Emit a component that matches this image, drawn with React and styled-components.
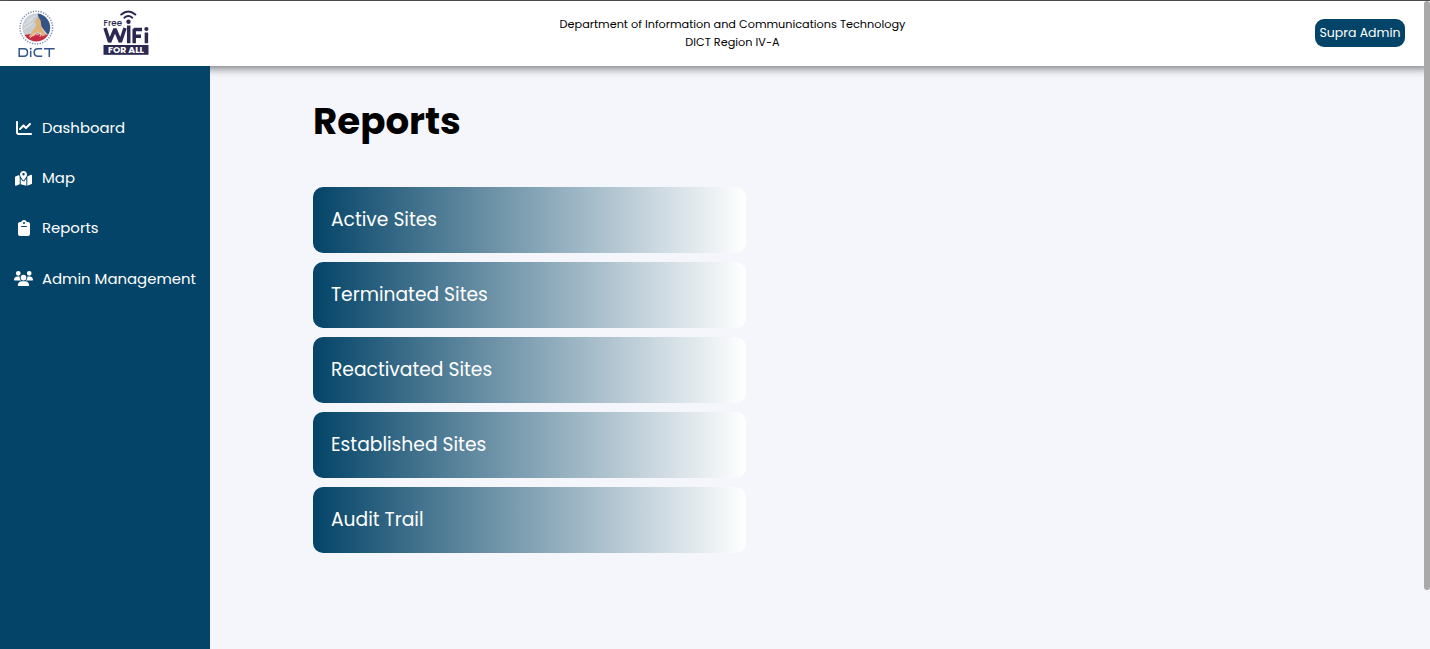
import React from 'react';
import styled, { createGlobalStyle } from 'styled-components';
import { FaChartLine, FaMapLocationDot, FaClipboard, FaUsers } from 'react-icons/fa6';

const GlobalStyle = createGlobalStyle`
  * { box-sizing: border-box; }
  body {
    margin: 0;
    overflow: hidden;
    background: #f4f6fb;
    font-family: Poppins, Inter, 'Open Sans', sans-serif;
  }
`;

const Page = styled.div`
  position: relative;
  display: flex;
  flex-direction: column;
  height: 100vh;
  border-top: 1px solid #58585a;
`;

const Header = styled.header`
  display: grid;
  grid-template-columns: 1fr auto 1fr;
  flex: none;
  height: 65px;
  padding: 0 25px 0 18px;
  background: #fff;
  box-shadow: 0 2px 9px rgba(0, 0, 0, 0.55);
`;

const Logos = styled.div`
  display: flex;
  gap: 47px;
  padding-top: 8px;
`;

const Department = styled.div`
  padding-top: 15px;
  margin-left: 42px;
  font-size: 11.27px;
  line-height: 17.5px;
  text-align: center;
  white-space: nowrap;
  color: #000;
`;

const UserButton = styled.button`
  justify-self: end;
  width: 90px;
  height: 28px;
  margin-top: 18px;
  padding: 0;
  border: 0;
  border-radius: 9px;
  background: #044468;
  color: #fff;
  font: 400 12.5px/28px Poppins, Inter, sans-serif;
  white-space: nowrap;
`;

const Body = styled.div`
  display: flex;
  flex: 1;
  min-height: 0;
`;

const Sidebar = styled.nav`
  position: relative;
  display: flex;
  flex-direction: column;
  flex: none;
  width: 210px;
  padding-top: 36.9px;
  background: #044468;
`;

const NavItem = styled.a`
  display: flex;
  align-items: center;
  height: 50.2px;
  color: #fff;
  font-size: 14.9px;
  white-space: nowrap;
`;

const NavIcon = styled.span`
  display: flex;
  justify-content: center;
  width: 18px;
  margin: 0 9px 0 15px;
  svg {
    flex: none;
    margin-left: -1px;
  }
`;

const Main = styled.main`
  flex: 1;
  padding: 29px 0 0 103px;
`;

const Title = styled.h1`
  margin: 0 0 40px;
  font-size: 37.2px;
  font-weight: 700;
  line-height: 52px;
  color: #000;
`;

const ReportList = styled.div`
  display: flex;
  flex-direction: column;
  gap: 9.4px;
  width: 433px;
`;

const ReportCard = styled.button`
  height: 65.7px;
  padding: 0 0 0 18px;
  border: 0;
  border-radius: 10px;
  background: linear-gradient(90deg, #044468, #fff);
  color: #fff;
  font: 400 18.7px/64px Poppins, Inter, sans-serif;
  text-align: left;
`;

const ScrollThumb = styled.div`
  position: absolute;
  top: 0;
  right: 0;
  width: 6px;
  height: 589px;
  border-radius: 3px;
  background: #a9a9a9;
`;

const DictLogo = () => (
  <svg width="38" height="50" viewBox="0 0 38 50">
    <circle cx="18.300" cy="18.600" r="16.300" fill="none" stroke="#8390ae" strokeWidth="1.5" strokeDasharray="1.300 1.300" />
    <circle cx="18.300" cy="18.600" r="14" fill="#c9ced5" />
    <path d="M19.500 4.600a14 14 0 0 1 10.500 21.500L23 17Z" fill="#345386" />
    <path d="M6.500 26Q18 23 30 26A14 14 0 0 1 6.500 26Z" fill="#c52c43" />
    <path d="M9 12l8-5M6 16l9-6M6 20l9-6" stroke="#e9ebee" strokeWidth="0.8" />
    <path d="M18 10l2-2 2.500 3 1 7 4 8-3 1.500-5-5.500-3 5-6 1 4-6 4-6-1.500-3Z" fill="#dfb277" />
    <path d="M12 29l5-5 2 2 4-2-1 4" fill="none" stroke="#f1dce0" strokeWidth="0.8" />
    <g fill="none" stroke="#34558c" strokeWidth="1.5">
      <path d="M1.200 39.800H6q3.500 0 3.500 3.700T6 47.200H1.200ZM12.700 41.800v6.100M24.200 39.800H20q-3.800 0-3.800 3.700t3.800 3.700h4.200M26 39.800h10.700M31.300 40v7.900" />
    </g>
    <circle cx="12.700" cy="39.800" r="1" fill="#34558c" />
  </svg>
);

const WifiLogo = () => (
  <svg width="47" height="48" viewBox="0 0 47 48">
    <g fill="none" stroke="#2b2851" strokeLinecap="round">
      <path d="M18.300 5.500q7-6 14 0" strokeWidth="2.100" />
      <path d="M21.300 8.700q4-3.400 8 0" strokeWidth="1.900" />
    </g>
    <circle cx="25.500" cy="12.800" r="2.200" fill="#2b2851" />
    <text x="0.500" y="16.800" fontFamily="Poppins, Inter, sans-serif" fontSize="8" fontWeight="500" fill="#2b2851" textLength="18.500" lengthAdjust="spacingAndGlyphs">Free</text>
    <g fill="none" stroke="#2b2851" strokeWidth="3.500" strokeLinejoin="bevel">
      <path d="M2 19l4.600 14L12 20l5.400 13L22 19" />
      <path d="M25.700 16.500v17.700M31.200 34.200V20.600h7.800M31 27.200h7M43.400 23.500v10.700" />
    </g>
    <circle cx="43.400" cy="20" r="2.100" fill="#2b2851" />
    <rect x="0.500" y="36" width="45" height="9.800" fill="#2b2851" />
    <text x="5" y="43.900" fontFamily="Poppins, Inter, sans-serif" fontSize="8.500" fontWeight="700" fill="#fff" textLength="36" lengthAdjust="spacingAndGlyphs">FOR ALL</text>
  </svg>
);

const navItems = [
  { label: 'Dashboard', icon: FaChartLine, size: 16 },
  { label: 'Map', icon: FaMapLocationDot, size: 17 },
  { label: 'Reports', icon: FaClipboard, size: 16 },
  { label: 'Admin Management', icon: FaUsers, size: 19 },
];

const reports = ['Active Sites', 'Terminated Sites', 'Reactivated Sites', 'Established Sites', 'Audit Trail'];

export default function App() {
  return (
    <>
      <GlobalStyle />
      <Page>
        <Header>
          <Logos>
            <DictLogo />
            <WifiLogo />
          </Logos>
          <Department>
            <div>Department of Information and Communications Technology</div>
            <div>DICT Region IV-A</div>
          </Department>
          <UserButton>Supra Admin</UserButton>
        </Header>
        <Body>
          <Sidebar>
            {navItems.map(({ label, icon: Icon, size }) => (
              <NavItem key={label}>
                <NavIcon><Icon size={size} /></NavIcon>
                {label}
              </NavItem>
            ))}
          </Sidebar>
          <Main>
            <Title>Reports</Title>
            <ReportList>
              {reports.map((label) => (
                <ReportCard key={label}>{label}</ReportCard>
              ))}
            </ReportList>
          </Main>
        </Body>
        <ScrollThumb />
      </Page>
    </>
  );
}
